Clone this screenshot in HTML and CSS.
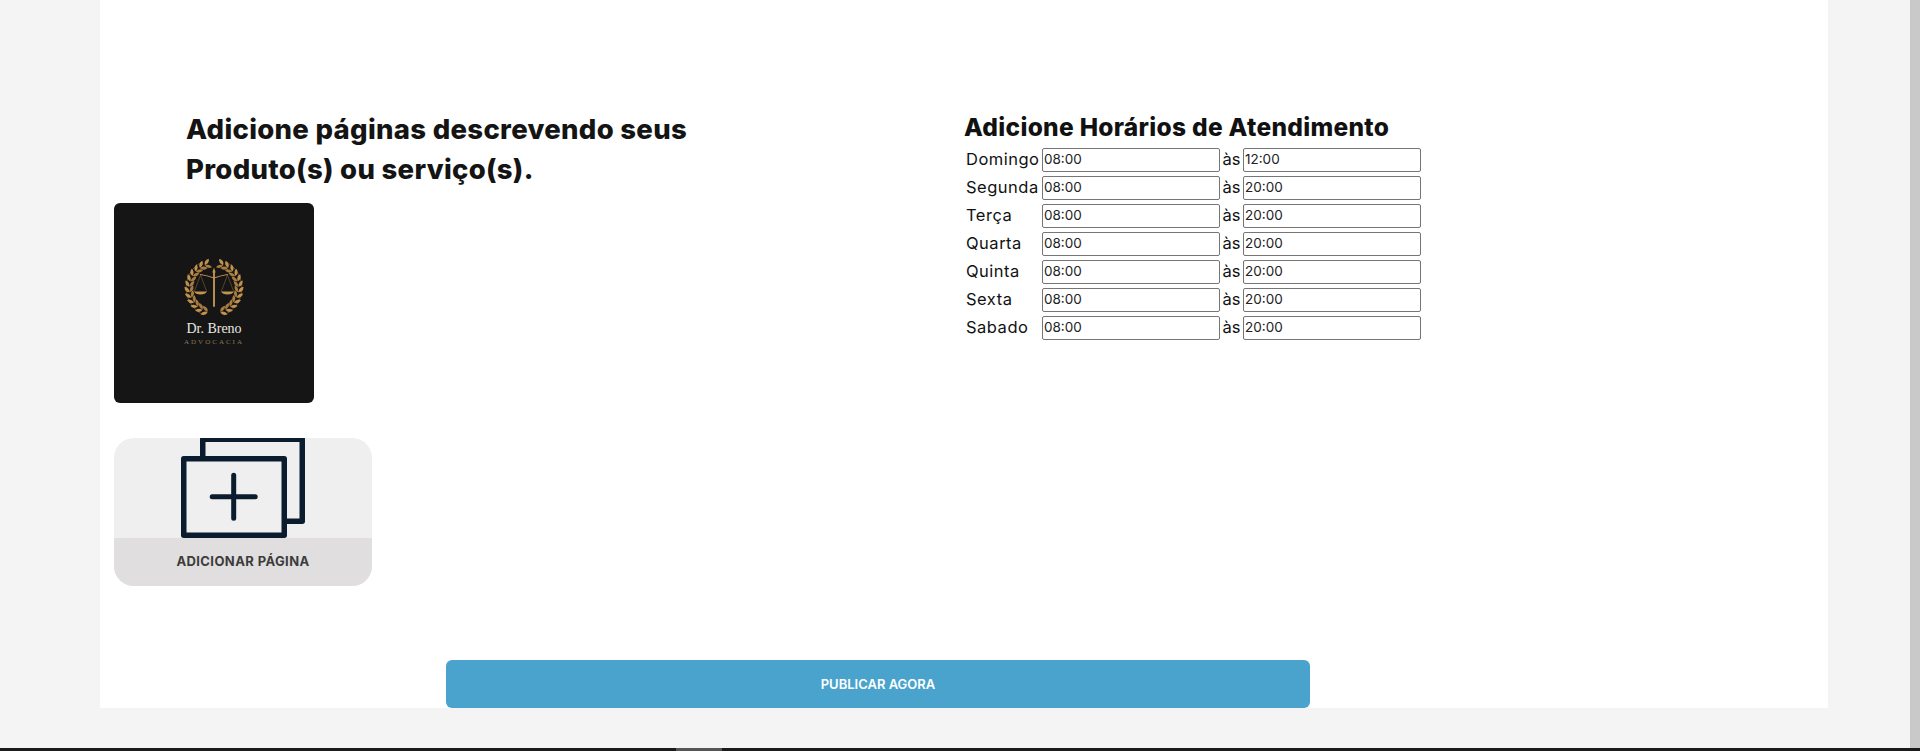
FILE: index.html
```html
<!DOCTYPE html>
<html lang="pt-BR">
<head>
<meta charset="utf-8">
<title>Adicione páginas</title>
<link rel="stylesheet" href="styles.css">
</head>
<body>
<div class="viewport">
  <div class="page">
    <main class="panel">
      <div class="columns">
        <section class="left">
          <h2 class="pages-title">Adicione páginas descrevendo seus<br>Produto(s) ou serviço(s).</h2>
          <div class="thumb">
            <svg class="logo" viewBox="0 0 60 60" width="60" height="60" aria-hidden="true">
              <defs>
                <g id="pair">
                  <path d="M30 5.500Q30.500 .800 36 1 35.500 5.200 30 5.500z" fill="#c09250"/>
                  <path d="M30 5.500Q30.500 10 36 10 35.500 5.800 30 5.500z" fill="#a87c40"/>
                </g>
                <g id="side">
                  <path d="M19.500 57C6 50-1 36 3.500 21 6 13 11 8 18 4" fill="none" stroke="#7d5a2c" stroke-width=".8"/>
                  <use href="#pair" transform="rotate(-22 30 30)"/>
                  <use href="#pair" transform="rotate(-35 30 30)"/>
                  <use href="#pair" transform="rotate(-48 30 30)"/>
                  <use href="#pair" transform="rotate(-61 30 30)"/>
                  <use href="#pair" transform="rotate(-74 30 30)"/>
                  <use href="#pair" transform="rotate(-87 30 30)"/>
                  <use href="#pair" transform="rotate(-100 30 30)"/>
                  <use href="#pair" transform="rotate(-113 30 30)"/>
                  <use href="#pair" transform="rotate(-126 30 30)"/>
                  <use href="#pair" transform="rotate(-139 30 30)"/>
                  <use href="#pair" transform="rotate(-152 30 30)"/>
                  <use href="#pair" transform="rotate(-165 30 30)"/>
                </g>
              </defs>
              <use href="#side"/>
              <use href="#side" transform="translate(60 0) scale(-1 1)"/>
              <g fill="none" stroke="#c09250" stroke-linecap="round">
                <path d="M30 13v35" stroke-width="1.900"/>
                <path d="M16.500 16.500Q23 17.500 30 20 37 17.500 43.500 16.500" stroke-width="1.200"/>
                <path d="M16.500 17l-6 16M16.500 17l6 16M43.500 17l-6 16M43.500 17l6 16" stroke-width=".5" stroke="#94723f"/>
              </g>
              <path d="M30 9.500l-1.700 5h3.400z" fill="#c09250"/>
              <path d="M10 33.500h13q-1.500 3-6.500 3t-6.500-3zM37 33.500h13q-1.500 3-6.500 3t-6.500-3z" fill="#c09250"/>
            </svg>
            <span class="logo-name">Dr. Breno</span>
            <span class="logo-sub">ADVOCACIA</span>
          </div>
          <button class="add-page" type="button">
            <span class="add-art">
              <svg viewBox="0 0 124 100" width="124" height="100" aria-hidden="true">
                <g fill="none" stroke="#0b1c2e" stroke-width="5.500" stroke-linejoin="round" stroke-linecap="round">
                  <path d="M21.750 20V1.250H121.250V83.250H104"/>
                  <rect x="2.750" y="20.750" width="100.500" height="76.500"/>
                  <path d="M52.700 37.200v43M31.200 58.700h43" stroke-width="5"/>
                </g>
              </svg>
            </span>
            <span class="add-label">ADICIONAR PÁGINA</span>
          </button>
        </section>
        <section class="right">
          <h2 class="hours-title">Adicione Horários de Atendimento</h2>
          <div class="hours">
            <div class="row"><span class="day">Domingo</span><input class="time" value="08:00"><span class="sep">às</span><input class="time" value="12:00"></div>
            <div class="row"><span class="day">Segunda</span><input class="time" value="08:00"><span class="sep">às</span><input class="time" value="20:00"></div>
            <div class="row"><span class="day">Terça</span><input class="time" value="08:00"><span class="sep">às</span><input class="time" value="20:00"></div>
            <div class="row"><span class="day">Quarta</span><input class="time" value="08:00"><span class="sep">às</span><input class="time" value="20:00"></div>
            <div class="row"><span class="day">Quinta</span><input class="time" value="08:00"><span class="sep">às</span><input class="time" value="20:00"></div>
            <div class="row"><span class="day">Sexta</span><input class="time" value="08:00"><span class="sep">às</span><input class="time" value="20:00"></div>
            <div class="row"><span class="day">Sabado</span><input class="time" value="08:00"><span class="sep">às</span><input class="time" value="20:00"></div>
          </div>
        </section>
      </div>
      <button class="publish" type="button">PUBLICAR AGORA</button>
    </main>
  </div>
  <div class="scrollbar"></div>
</div>
<footer class="taskbar"><span class="taskbar-tab"></span></footer>
</body>
</html>
```
FILE: styles.css
```css
* { box-sizing: border-box; }
html, body { margin: 0; height: 100%; overflow: hidden; }
body {
  background: #f4f4f4;
  font-family: Inter, "Noto Sans", sans-serif;
  color: #111;
  display: flex;
  flex-direction: column;
}
.viewport { flex: 1; display: flex; min-height: 0; }
.page { flex: 1; padding: 0 82px 0 100px; }
.scrollbar { width: 10px; background: #c9c9c9; }
.panel { background: #fff; height: 708px; padding-top: 109px; }
.columns { display: flex; height: 551px; }
.left { width: 864px; padding-left: 14px; }
.pages-title {
  margin: 0 0 14px 72px;
  font-size: 27.500px;
  line-height: 40px;
  font-weight: 800;
  letter-spacing: .3px;
  color: #141414;
}
.thumb {
  width: 200px;
  height: 200px;
  background: #151515;
  border-radius: 6px;
  display: flex;
  flex-direction: column;
  align-items: center;
  padding-top: 55px;
}
.logo { display: block; flex: none; }
.logo-name {
  font-family: "Liberation Serif", serif;
  font-size: 14px;
  line-height: 14px;
  color: #e9e6e0;
  margin-top: 4px;
}
.logo-sub {
  font-family: "Liberation Serif", serif;
  font-size: 7px;
  line-height: 10px;
  letter-spacing: 2px;
  color: #8a7654;
  margin-top: 1px;
}
.add-page {
  display: block;
  width: 258px;
  height: 148px;
  margin-top: 35px;
  padding: 0;
  border: 0;
  border-radius: 20px;
  background: #efefef;
  overflow: hidden;
  font: inherit;
}
.add-art { display: block; height: 100px; padding-left: 67px; overflow: hidden; }
.add-art svg { display: block; }
.add-label {
  display: block;
  height: 48px;
  background: #e0dedf;
  color: #3c3c3c;
  font-size: 13px;
  line-height: 46px;
  font-weight: 700;
  letter-spacing: .4px;
}
.right { flex: 1; }
.hours-title {
  margin: 0 0 3px;
  font-size: 24.500px;
  line-height: 36px;
  font-weight: 800;
  letter-spacing: .3px;
  color: #111;
}
.hours { display: flex; flex-direction: column; gap: 4px; }
.row { display: flex; align-items: center; height: 24px; padding-left: 2px; font-size: 16.500px; letter-spacing: .5px; }
.day { width: 76px; padding-bottom: 2px; }
.sep { width: 23px; text-align: center; padding-bottom: 2px; letter-spacing: 0; }
.time {
  width: 178px;
  height: 24px;
  padding: 0 1px 2px;
  border: 1px solid #767676;
  border-radius: 2px;
  background: #fff;
  color: #222;
  font: 13.500px Inter, "Noto Sans", sans-serif;
}
.publish {
  display: block;
  width: 864px;
  height: 48px;
  margin-left: 346px;
  border: 0;
  border-radius: 6px;
  background: #4aa3cc;
  color: #fff;
  font: 600 13px Inter, "Noto Sans", sans-serif;
}
.taskbar { height: 3px; flex: none; background: #1b1b1b; padding-left: 676px; }
.taskbar-tab { display: block; width: 46px; height: 3px; background: #555; }
```
